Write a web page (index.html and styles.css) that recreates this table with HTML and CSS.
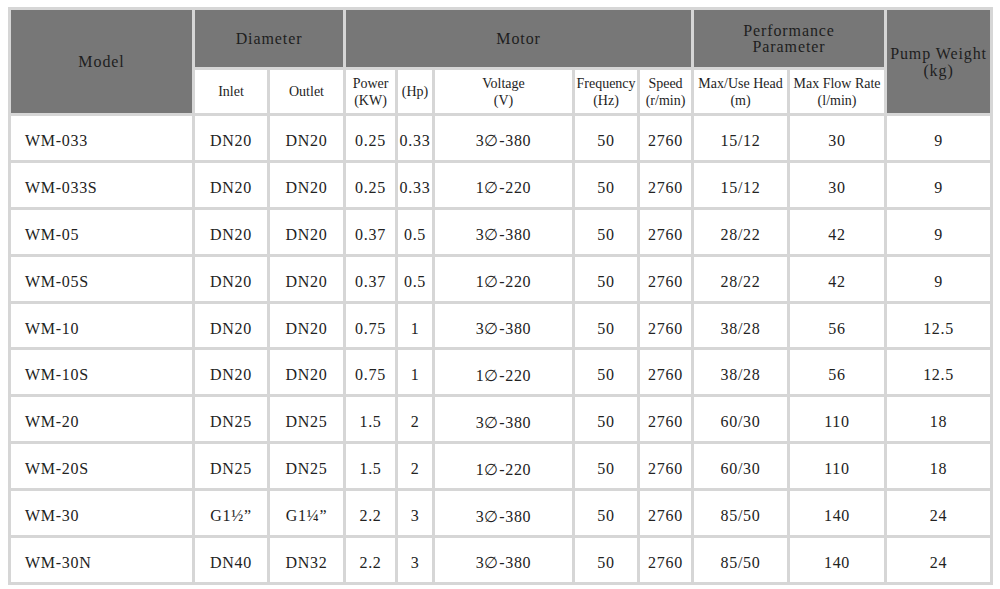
FILE: index.html
```html
<!DOCTYPE html>
<html lang="en">
<head>
<meta charset="utf-8">
<title>Pump specifications</title>
<link rel="stylesheet" href="styles.css">
</head>
<body>
<table class="spec">
  <colgroup>
    <col class="c-model"><col class="c-inlet"><col class="c-outlet"><col class="c-power"><col class="c-hp"><col class="c-volt"><col class="c-freq"><col class="c-speed"><col class="c-head"><col class="c-flow"><col class="c-weight">
  </colgroup>
  <thead>
    <tr class="hrow1">
      <th class="grp" rowspan="2">Model</th>
      <th class="grp" colspan="2">Diameter</th>
      <th class="grp" colspan="5">Motor</th>
      <th class="grp tight" colspan="2">Performance<br>Parameter</th>
      <th class="grp loose" rowspan="2">Pump Weight<br>(kg)</th>
    </tr>
    <tr class="hrow2">
      <th class="sub">Inlet</th>
      <th class="sub">Outlet</th>
      <th class="sub">Power<br>(KW)</th>
      <th class="sub">(Hp)</th>
      <th class="sub">Voltage<br>(V)</th>
      <th class="sub">Frequency<br>(Hz)</th>
      <th class="sub">Speed<br>(r/min)</th>
      <th class="sub">Max/Use Head<br>(m)</th>
      <th class="sub">Max Flow Rate<br>(l/min)</th>
    </tr>
  </thead>
  <tbody>
    <tr><td class="model">WM-033</td><td>DN20</td><td>DN20</td><td>0.25</td><td>0.33</td><td>3∅-380</td><td>50</td><td>2760</td><td>15/12</td><td>30</td><td>9</td></tr>
    <tr><td class="model">WM-033S</td><td>DN20</td><td>DN20</td><td>0.25</td><td>0.33</td><td>1∅-220</td><td>50</td><td>2760</td><td>15/12</td><td>30</td><td>9</td></tr>
    <tr><td class="model">WM-05</td><td>DN20</td><td>DN20</td><td>0.37</td><td>0.5</td><td>3∅-380</td><td>50</td><td>2760</td><td>28/22</td><td>42</td><td>9</td></tr>
    <tr><td class="model">WM-05S</td><td>DN20</td><td>DN20</td><td>0.37</td><td>0.5</td><td>1∅-220</td><td>50</td><td>2760</td><td>28/22</td><td>42</td><td>9</td></tr>
    <tr><td class="model">WM-10</td><td>DN20</td><td>DN20</td><td>0.75</td><td>1</td><td>3∅-380</td><td>50</td><td>2760</td><td>38/28</td><td>56</td><td>12.5</td></tr>
    <tr><td class="model">WM-10S</td><td>DN20</td><td>DN20</td><td>0.75</td><td>1</td><td>1∅-220</td><td>50</td><td>2760</td><td>38/28</td><td>56</td><td>12.5</td></tr>
    <tr><td class="model">WM-20</td><td>DN25</td><td>DN25</td><td>1.5</td><td>2</td><td>3∅-380</td><td>50</td><td>2760</td><td>60/30</td><td>110</td><td>18</td></tr>
    <tr><td class="model">WM-20S</td><td>DN25</td><td>DN25</td><td>1.5</td><td>2</td><td>1∅-220</td><td>50</td><td>2760</td><td>60/30</td><td>110</td><td>18</td></tr>
    <tr><td class="model">WM-30</td><td>G1½”</td><td>G1¼”</td><td>2.2</td><td>3</td><td>3∅-380</td><td>50</td><td>2760</td><td>85/50</td><td>140</td><td>24</td></tr>
    <tr><td class="model">WM-30N</td><td>DN40</td><td>DN32</td><td>2.2</td><td>3</td><td>3∅-380</td><td>50</td><td>2760</td><td>85/50</td><td>140</td><td>24</td></tr>
  </tbody>
</table>
</body>
</html>
```

FILE: styles.css
```css
html, body {
  margin: 0;
  padding: 0;
  background: #ffffff;
}

body {
  font-family: "Liberation Serif", "Times New Roman", serif;
  color: #222222;
}

.spec {
  margin: 7px 0 0 8px;
  width: 985px;
  table-layout: fixed;
  border-collapse: separate;
  border-spacing: 3px;
  background: #d6d6d6;
}

.c-model { width: 181px; }
.c-inlet { width: 72px; }
.c-outlet { width: 73px; }
.c-power { width: 49px; }
.c-hp { width: 34px; }
.c-volt { width: 137px; }
.c-freq { width: 62px; }
.c-speed { width: 51px; }
.c-head { width: 93px; }
.c-flow { width: 94px; }
.c-weight { width: 103px; }

.spec th,
.spec td {
  padding: 0;
  text-align: center;
  vertical-align: middle;
  font-weight: normal;
  white-space: nowrap;
}

.hrow1 { height: 57px; }
.hrow2 { height: 43px; }

.grp {
  background: #777777;
  color: #1e1e1e;
  font-size: 16px;
  letter-spacing: 0.9px;
  line-height: 16px;
}

.grp.loose { line-height: 17px; }

.sub {
  background: #ffffff;
  font-size: 14px;
  line-height: 17px;
  color: #1e1e1e;
}

.spec td {
  background: #ffffff;
  height: 43.9px;
  font-size: 16px;
  letter-spacing: 0.7px;
  padding-top: 6px;
  box-sizing: border-box;
}

.spec td.model {
  text-align: left;
  padding-left: 14px;
}
```
